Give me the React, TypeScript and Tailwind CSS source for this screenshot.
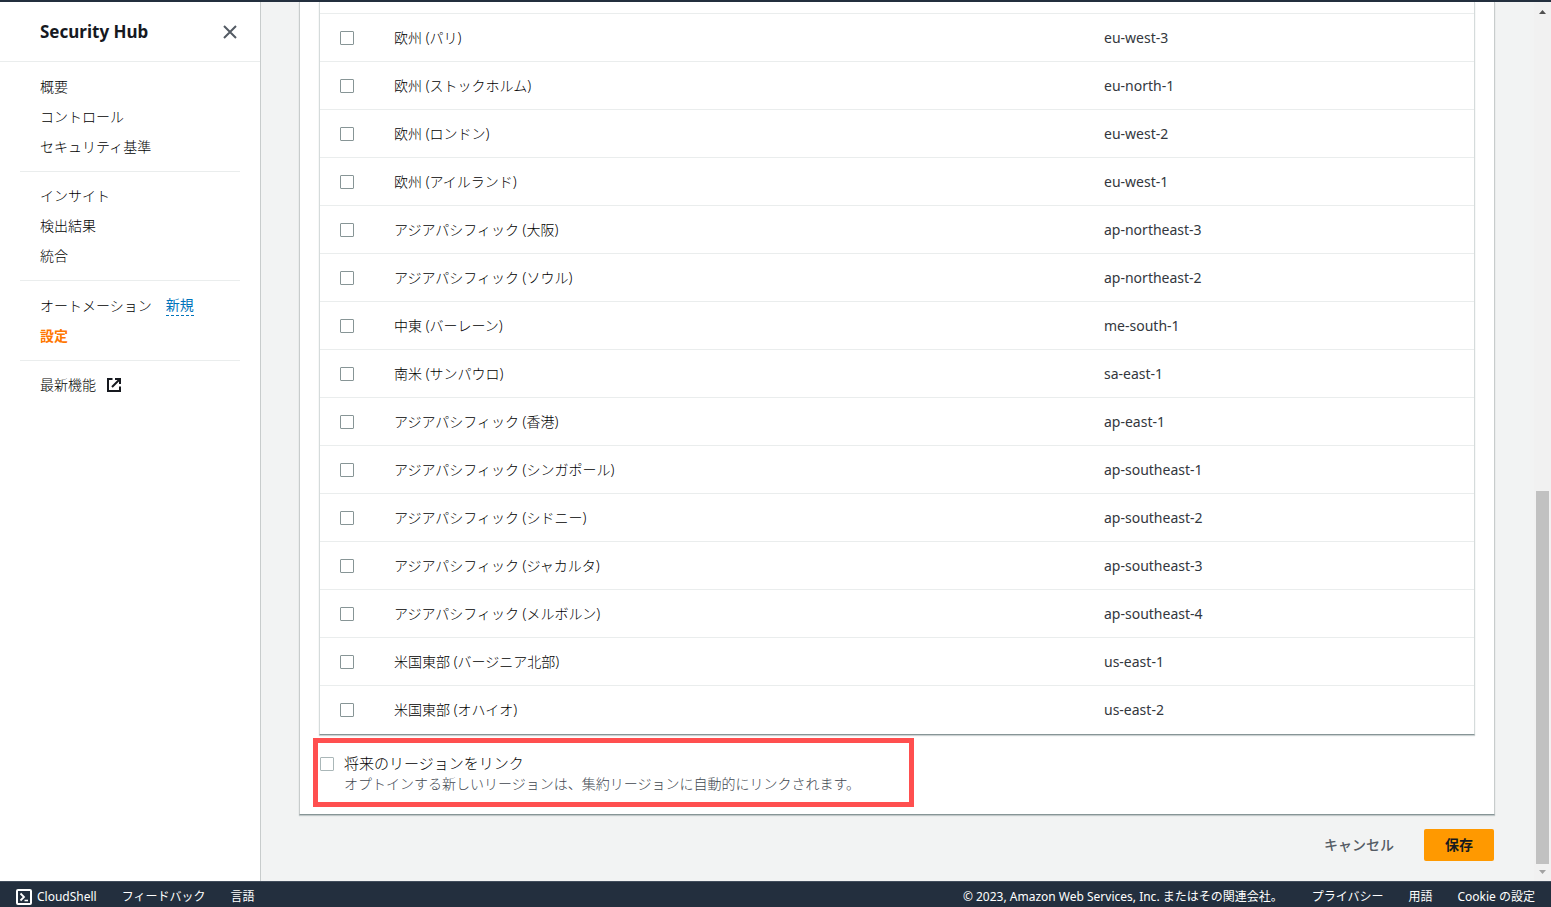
import React from "react";

const regions: [string, string][] = [
  ["欧州 (パリ)", "eu-west-3"],
  ["欧州 (ストックホルム)", "eu-north-1"],
  ["欧州 (ロンドン)", "eu-west-2"],
  ["欧州 (アイルランド)", "eu-west-1"],
  ["アジアパシフィック (大阪)", "ap-northeast-3"],
  ["アジアパシフィック (ソウル)", "ap-northeast-2"],
  ["中東 (バーレーン)", "me-south-1"],
  ["南米 (サンパウロ)", "sa-east-1"],
  ["アジアパシフィック (香港)", "ap-east-1"],
  ["アジアパシフィック (シンガポール)", "ap-southeast-1"],
  ["アジアパシフィック (シドニー)", "ap-southeast-2"],
  ["アジアパシフィック (ジャカルタ)", "ap-southeast-3"],
  ["アジアパシフィック (メルボルン)", "ap-southeast-4"],
  ["米国東部 (バージニア北部)", "us-east-1"],
  ["米国東部 (オハイオ)", "us-east-2"],
];

const checkboxClass =
  "block size-[14px] shrink-0 appearance-none rounded-[1px] border bg-white checked:bg-[#0073bb]";

function NavLink({ children }: { children: React.ReactNode }) {
  return (
    <li className="flex h-[30px] items-center">
      <a href="#" className="hover:text-[#ec7211]">
        {children}
      </a>
    </li>
  );
}

function Divider() {
  return <hr className="mx-5 my-[9px] border-[#eaeded]" />;
}

function Sidebar() {
  return (
    <nav className="w-[261px] shrink-0 border-r border-[#c8cccc] bg-white text-sm font-light text-black">
      <div className="flex h-[60px] items-center justify-between border-b border-[#eaeded] pr-[22px] pl-10">
        <h2 className="pt-px text-[17px] font-bold text-[#16191f]">Security Hub</h2>
        <button type="button" aria-label="閉じる" className="p-px">
          <svg viewBox="0 0 14 14" className="size-[14px]" fill="none" stroke="#545b64" strokeWidth="2">
            <path d="M1 1l12 12M13 1L1 13" />
          </svg>
        </button>
      </div>
      <ul className="pt-[10px] pl-10">
        <NavLink>概要</NavLink>
        <NavLink>コントロール</NavLink>
        <NavLink>セキュリティ基準</NavLink>
      </ul>
      <Divider />
      <ul className="pl-10">
        <NavLink>インサイト</NavLink>
        <NavLink>検出結果</NavLink>
        <NavLink>統合</NavLink>
      </ul>
      <Divider />
      <ul className="pl-10">
        <li className="flex h-[31px] items-center gap-[14px]">
          <a href="#">オートメーション</a>
          <button
            type="button"
            className="border-b border-dashed border-[#0073bb] leading-5 font-normal text-[#0073bb]"
          >
            新規
          </button>
        </li>
        <li className="flex h-[30px] items-center">
          <a href="#" aria-current="page" className="font-bold text-[#ff7701]">
            設定
          </a>
        </li>
      </ul>
      <Divider />
      <ul className="pl-10">
        <li className="flex h-[30px] items-center">
          <a href="#" className="flex items-center gap-[11px]">
            最新機能
            <svg viewBox="0 0 14 14" className="size-[14px]" fill="none" stroke="#16191f" strokeWidth="2">
              <path d="M5.500 1H1v12h12V8.500" />
              <path d="M8 1h5v5M13 1L5 9" />
            </svg>
          </a>
        </li>
      </ul>
    </nav>
  );
}

function RegionTable() {
  return (
    <div className="border-x border-b border-x-[#d5dbdb] border-b-[#879596] pt-[11px] pb-px shadow-[0_1px_1px_0_rgba(0,28,36,0.2)]">
      <table className="w-full table-fixed border-separate border-spacing-0 text-sm text-black">
        <colgroup>
          <col className="w-[54px]" />
          <col />
          <col className="w-[390px]" />
        </colgroup>
        <tbody>
          {regions.map(([name, code]) => (
            <tr key={code} className="h-12">
              <td className="border-t border-[#eaeded] pl-5">
                <input type="checkbox" aria-label={name} className={checkboxClass + " border-[#879596]"} />
              </td>
              <td className="border-t border-[#eaeded] px-5 font-light">{name}</td>
              <td className="border-t border-[#eaeded] px-5 text-[#33373d]">{code}</td>
            </tr>
          ))}
        </tbody>
      </table>
    </div>
  );
}

function ScrollBar() {
  return (
    <div aria-hidden="true" className="flex w-[17px] shrink-0 flex-col items-center bg-[#f1f1f1]">
      <svg viewBox="0 0 17 17" className="size-[17px]">
        <path d="M5 12l3.500-4 3.500 4z" fill="#505050" />
      </svg>
      <div className="grow-[472]" />
      <div className="w-[13px] grow-[373] bg-[#c1c1c1]" />
      <svg viewBox="0 0 17 17" className="size-[17px]">
        <path d="M5 6l3.500 4L12 6z" fill="#a3a3a3" />
      </svg>
    </div>
  );
}

function Footer() {
  return (
    <footer className="flex h-[26px] shrink-0 items-center justify-between border-t border-[#414d5c] bg-[#232f3e] px-4 pt-[5px] text-xs whitespace-nowrap text-white">
      <div className="flex items-center gap-[25px]">
        <button type="button" className="flex items-center gap-[5px]">
          <svg viewBox="0 0 16 16" className="size-4" fill="none" stroke="#fff" strokeWidth="2">
            <rect x="1" y="1" width="14" height="14" rx="1" />
            <path d="M4.500 4.500L8 8l-3.500 3.500" strokeWidth="1.800" />
            <path d="M8.500 11.500h3.500" strokeWidth="1.600" />
          </svg>
          CloudShell
        </button>
        <a href="#">フィードバック</a>
        <button type="button">言語</button>
      </div>
      <div className="flex items-center gap-[25px]">
        <span className="pr-1">© 2023, Amazon Web Services, Inc. またはその関連会社。</span>
        <a href="#">プライバシー</a>
        <a href="#">用語</a>
        <a href="#">Cookie の設定</a>
      </div>
    </footer>
  );
}

export default function App() {
  return (
    <div className="flex min-h-screen flex-col border-t-2 border-[#232f3e] bg-[#f2f3f3] font-['Noto_Sans','Noto_Sans_CJK_JP',sans-serif]">
      <div className="flex grow">
        <Sidebar />
        <main className="min-w-0 grow pr-[39px] pb-5 pl-[38px]">
          <section className="border-x border-b border-x-[#c8cccc] border-b-[#879596] bg-white px-[19px] pb-[7px] shadow-[0_1px_1px_0_rgba(0,28,36,0.2)]">
            <RegionTable />
            <div className="relative flex gap-[10px] pt-[18px] pb-[13px] pl-px">
              <input
                id="future"
                type="checkbox"
                aria-describedby="future-hint"
                className={checkboxClass + " mt-1 border-[#aab7b8]"}
              />
              <div className="font-light">
                <label htmlFor="future" className="block text-[15px] leading-[21px] text-black">
                  将来のリージョンをリンク
                </label>
                <p id="future-hint" className="text-sm leading-5 text-[#414750]">
                  オプトインする新しいリージョンは、集約リージョンに自動的にリンクされます。
                </p>
              </div>
              <div className="pointer-events-none absolute top-[3px] bottom-0 -left-[6px] w-[601px] border-[5px] border-[#ff4f4f]" />
            </div>
          </section>
          <div className="mt-[14px] flex justify-end pr-px">
            <button type="button" className="h-8 px-[30px] text-sm font-medium text-[#545b64]">
              キャンセル
            </button>
            <button
              type="button"
              className="h-8 w-[70px] rounded-[2px] bg-[#ff9900] text-sm font-bold text-[#16191f]"
            >
              保存
            </button>
          </div>
        </main>
        <ScrollBar />
      </div>
      <Footer />
    </div>
  );
}
